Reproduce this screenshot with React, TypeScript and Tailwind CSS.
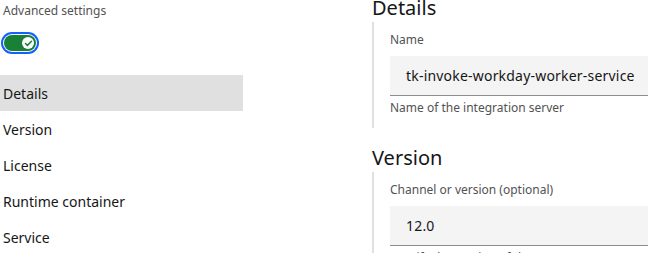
import { Check } from 'lucide-react'

const navItems = ['Details', 'Version', 'License', 'Runtime container', 'Service']

function Toggle() {
  return (
    <div className="ml-[4px] mt-[16px] h-[16px] w-[32px] rounded-full bg-[#198038] shadow-[0_0_0_1px_#ffffff,0_0_0_3px_#0f62fe] relative">
      <span className="absolute right-[2px] top-[2px] flex h-[12px] w-[12px] items-center justify-center rounded-full bg-white">
        <Check className="h-[9px] w-[9px] text-[#198038]" strokeWidth={4} />
      </span>
    </div>
  )
}

function Field({ label, value, helper }: { label: string; value: string; helper: string }) {
  return (
    <div className="border-l-2 border-[#e0e0e0] pl-[16px] pt-[10px] pb-[12px]">
      <div className="text-[12px] leading-[16px] text-[#525252]">{label}</div>
      <div className="mt-[8px] flex h-[40px] items-center border-b border-[#8d8d8d] bg-[#f4f4f4] px-[16px] text-[14px] tracking-[0.2px] text-[#161616]">
        {value}
      </div>
      <div className="mt-[4px] text-[12px] leading-[16px] text-[#525252]">{helper}</div>
    </div>
  )
}

export default function App() {
  return (
    <div
      className="flex h-[253px] w-[648px] overflow-hidden bg-white"
      style={{ fontFamily: '"Noto Sans", "Liberation Sans", sans-serif' }}
    >
      <div className="w-[243px] shrink-0">
        <div className="pl-[3px] pt-[3px] text-[12px] leading-[16px] text-[#525252]">Advanced settings</div>
        <Toggle />
        <div className="mt-[24px]">
          {navItems.map((item, i) => (
            <div
              key={item}
              className={`flex h-[36px] items-center pl-[3px] text-[14px] text-[#161616] ${i === 0 ? 'bg-[#e0e0e0]' : ''}`}
            >
              {item}
            </div>
          ))}
        </div>
      </div>
      <div className="ml-[129px] w-[400px] shrink-0">
        <h2 className="-mt-[6px] text-[20px] leading-[28px] text-[#161616]">Details</h2>
        <Field label="Name" value="tk-invoke-workday-worker-service" helper="Name of the integration server" />
        <h2 className="mt-[16px] text-[20px] leading-[28px] text-[#161616]">Version</h2>
        <Field
          label="Channel or version (optional)"
          value="12.0"
          helper="Specify the version of the App Connect Enterprise runtime"
        />
      </div>
    </div>
  )
}
